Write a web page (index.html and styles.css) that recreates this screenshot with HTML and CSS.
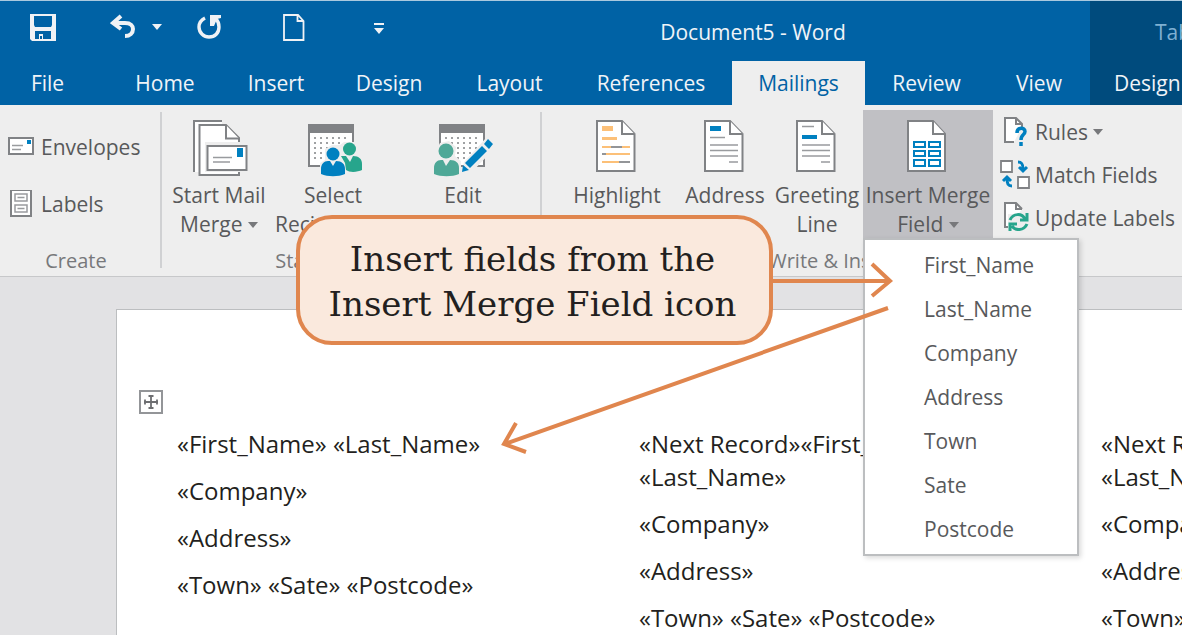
FILE: index.html
```html
<!DOCTYPE html>
<html lang="en">
<head>
    <meta charset="UTF-8">
    <meta name="viewport" content="width=device-width, initial-scale=1.0">
    <title>Document5 - Word</title>
    <link rel="stylesheet" href="styles.css">
</head>
<body>
    <div class="window">
        <header class="header">
            <div class="header-main">
                <div class="titlebar">
                    <div class="quick-access">
                        <button class="qa-btn qa-save" aria-label="Save">
                            <svg width="26" height="27" viewBox="0 0 26 27"><path fill="#f0f2f5" fill-rule="evenodd" d="M0 0H26V27H2L0 25ZM4 2V11L5 13H21L22 11V2ZM5 17V25H9V20H13V25H21V17Z"/><path fill="#f0f2f5" d="M9 20H13V25H9Z"/><path fill="#0062a5" d="M10 22H12V25H10Z"/></svg>
                        </button>
                        <button class="qa-btn qa-undo" aria-label="Undo">
                            <svg width="54" height="26" viewBox="0 0 54 26"><path fill="none" stroke="#f0f2f5" stroke-width="4" d="M11 2 3 9 11 15M3 9H15C21 9 23 12 23 15 23 19 20 22 15 22"/><path fill="#f0f2f5" d="M42 10H52L47 16Z"/></svg>
                        </button>
                        <button class="qa-btn qa-redo" aria-label="Redo">
                            <svg width="26" height="26" viewBox="0 0 26 26"><path fill="none" stroke="#f0f2f5" stroke-width="3.400" d="M8 4C4 6 2 9 2 13 2 19 7 23 12 23 18 23 22 19 22 13 22 10 21 7 19 5"/><path fill="#f0f2f5" d="M13 1H24V4L20 5 17 12H13Z"/></svg>
                        </button>
                        <button class="qa-btn qa-new" aria-label="New document">
                            <svg width="22" height="27" viewBox="0 0 22 27"><path fill="none" stroke="#f0f2f5" stroke-width="1.800" d="M1 1H15L20.500 7V26H1ZM14.500 1V7H20.500"/></svg>
                        </button>
                        <button class="qa-btn" aria-label="Customize Quick Access Toolbar">
                            <svg width="12" height="14" viewBox="0 0 12 14"><path fill="#f0f2f5" d="M1 1H11V3H1ZM1 6H11L6 12Z"/></svg>
                        </button>
                    </div>
                    <div class="doc-title">Document5 - Word</div>
                </div>
                <nav class="tabs">
                    <button class="tab">File</button>
                    <button class="tab tab-home">Home</button>
                    <button class="tab">Insert</button>
                    <button class="tab">Design</button>
                    <button class="tab">Layout</button>
                    <button class="tab">References</button>
                    <button class="tab active">Mailings</button>
                    <button class="tab">Review</button>
                    <button class="tab">View</button>
                </nav>
            </div>
            <div class="header-context">
                <div class="context-title">Table Tools</div>
                <button class="tab">Design</button>
            </div>
        </header>

        <div class="ribbon">
            <section class="group group-create">
                <div class="group-body stack-wide">
                    <button class="small-btn">
                        <svg width="28" height="28" viewBox="0 0 28 28"><rect x="1" y="5" width="24" height="16" fill="#fff" stroke="#808285" stroke-width="2"/><path fill="#0080c0" d="M19 7H23V11H19Z"/><path stroke="#999b9e" stroke-width="1.400" d="M4 12.500H15M4 16.500H13"/></svg>
                        Envelopes
                    </button>
                    <button class="small-btn">
                        <svg width="28" height="28" viewBox="0 0 28 28"><rect x="3" y="0" width="20" height="26" fill="#fff" stroke="#808285" stroke-width="2"/><path fill="none" stroke="#999b9e" stroke-width="1.500" d="M7 4H19V11H7ZM7 15H19V22H7ZM9.500 7.500H16.500M9.500 18.500H16.500"/></svg>
                        Labels
                    </button>
                </div>
                <div class="group-label">Create</div>
            </section>

            <section class="group group-start">
                <div class="group-body">
                    <button class="big-btn">
                        <svg width="60" height="60" viewBox="0 0 60 60"><path fill="#fff" d="M4 3H33V7H10V54H4Z"/><path fill="none" stroke="#808285" stroke-width="2" d="M33 3H5V54"/><path fill="#fff" stroke="#808285" stroke-width="2" d="M10.500 7H37L50 20V57H10.500Z"/><path fill="#fff" stroke="#808285" stroke-width="2" d="M37 7V20.500H50"/><path fill="#eee" d="M16 24H60V54H16Z"/><path fill="#fff" stroke="#808285" stroke-width="2" d="M18.500 28H57.500V52H18.500Z"/><path fill="#0080c0" d="M48 30H54V39H48Z"/><path stroke="#999b9e" stroke-width="1.400" d="M24 39.500H43M24 44H41"/></svg>
                        <span>Start Mail<br>Merge <i class="caret"></i></span>
                    </button>
                    <button class="big-btn">
                        <svg width="60" height="60" viewBox="0 0 60 60"><path fill="#fff" stroke="#808285" stroke-width="2" d="M6 8H50V48H6Z"/><path fill="#808285" d="M5 6H51V15H5Z"/><path stroke="#808285" stroke-width="1.700" stroke-dasharray="2 4" d="M11 20H47M11 25H47M11 30H47M11 35H47M11 40H47"/><path fill="#eee" d="M17 60V45L22 42 22 31 29 27H37L41 24H53L56 29V37L61 41V60Z"/><circle cx="46.500" cy="31" r="6.500" fill="#27a58c"/><path fill="#27a58c" d="M38 38H43L47 44 50 38C56 38 59 41 59 46V52C55 54 47 55 43 52L42 45Z"/><circle cx="30" cy="36" r="6.500" fill="#0080c0"/><path fill="#0080c0" d="M25 43H27L30 48 33 43C39 43 42 46 42 51V56C35 59 25 59 18 56V51C18 46 21 43 25 43Z"/></svg>
                        <span>Select<br>Recipients <i class="caret"></i></span>
                    </button>
                    <button class="big-btn btn-edit">
                        <svg width="60" height="60" viewBox="0 0 60 60"><path fill="#fff" stroke="#808285" stroke-width="2" d="M7 8H51V48H7Z"/><path fill="#808285" d="M6 6H52V15H6Z"/><path stroke="#808285" stroke-width="1.700" stroke-dasharray="2 4" d="M12 20H48M12 25H48M12 30H48M12 35H48M12 40H48"/><path fill="#eee" d="M0 60V43L5 40 3 33 7 25 16 23 23 29 22 38 28 43V60ZM28 57 31 44 53 20 61 24V31L37 56Z"/><circle cx="13" cy="33" r="7.500" fill="#4ea897"/><path fill="#4ea897" d="M8 42H10L13 48 17 42C23 42 26 45 26 50V56C19 59 8 59 1 56V50C1 45 4 42 8 42Z"/><path fill="#0080c0" d="M30 47 36 52 29 54ZM32 45 49 28 54 33 37 50ZM51 26 55 21 60 26 56 31Z"/></svg>
                        <span>Edit<br>Recipient List</span>
                    </button>
                </div>
                <div class="group-label">Start Mail Merge</div>
            </section>

            <section class="group group-write">
                <div class="group-body">
                    <button class="big-btn btn-highlight">
                        <svg width="60" height="60" viewBox="0 0 60 60"><path fill="#fff" stroke="#808285" stroke-width="2" d="M10 3H35L47.500 16V53H10Z"/><path fill="#fff" stroke="#808285" stroke-width="2" d="M35 3V16H47.500"/><path fill="#fcc078" d="M15 8H26V13H15ZM15 19H30V22H15Z"/><path stroke="#fcc078" stroke-width="2" d="M15 29H43M15 36H43M15 44H43"/><path stroke="#939598" stroke-width="2" d="M24 29H35M15 36H19M32 44H43"/></svg>
                        <span>Highlight<br>Merge Fields</span>
                    </button>
                    <button class="big-btn btn-line">
                        <svg width="60" height="60" viewBox="0 0 60 60"><path fill="#fff" stroke="#808285" stroke-width="2" d="M10 3H35L47.500 16V53H10Z"/><path fill="#fff" stroke="#808285" stroke-width="2" d="M35 3V16H47.500"/><path fill="#0080c0" d="M15 8H26V13H15Z"/><path stroke="#999b9e" stroke-width="1.600" d="M15 19.500H30M15 27H43M15 32.500H43M15 38H43M34 44H43"/></svg>
                        <span>Address<br>Block</span>
                    </button>
                    <button class="big-btn btn-line">
                        <svg width="60" height="60" viewBox="0 0 60 60"><path fill="#fff" stroke="#808285" stroke-width="2" d="M10 3H35L47.500 16V53H10Z"/><path fill="#fff" stroke="#808285" stroke-width="2" d="M35 3V16H47.500"/><path fill="#0080c0" d="M15 17H30V21H15Z"/><path stroke="#999b9e" stroke-width="1.600" d="M15 8.500H27M15 27H43M15 32.500H43M15 38H43M34 44H43"/></svg>
                        <span>Greeting<br>Line</span>
                    </button>
                    <div class="menu-anchor">
                        <button class="big-btn btn-insert" aria-haspopup="menu" aria-expanded="true">
                            <svg width="60" height="60" viewBox="0 0 60 60"><path fill="#fff" stroke="#808285" stroke-width="2" d="M10 3H35L47 16V53H10Z"/><path fill="#fff" stroke="#808285" stroke-width="2" d="M35 3V16H47"/><path fill="#fff" stroke="#0080c0" stroke-width="2" d="M16 24H27V29H16ZM31 24H42V29H31ZM16 33H27V38H16ZM31 33H42V38H31ZM16 42H27V48H16ZM31 42H42V48H31Z"/></svg>
                            <span>Insert Merge<br>Field <i class="caret"></i></span>
                        </button>
                        <ul class="menu" role="menu">
                            <li><button role="menuitem">First_Name</button></li>
                            <li><button role="menuitem">Last_Name</button></li>
                            <li><button role="menuitem">Company</button></li>
                            <li><button role="menuitem">Address</button></li>
                            <li><button role="menuitem">Town</button></li>
                            <li><button role="menuitem">Sate</button></li>
                            <li><button role="menuitem">Postcode</button></li>
                        </ul>
                    </div>
                    <div class="stack">
                        <button class="small-btn">
                            <svg width="30" height="32" viewBox="0 0 30 32"><path fill="#fff" stroke="#808285" stroke-width="2" d="M14 26H5V2H16L22 8V11"/><path fill="none" stroke="#808285" stroke-width="2" d="M16 2V8H22"/><path fill="none" stroke="#0080c0" stroke-width="3.500" d="M17 17C17 11 25 11 25 15.500 25 19 21 18 21 24M21 26V30"/></svg>
                            Rules <i class="caret"></i>
                        </button>
                        <button class="small-btn">
                            <svg width="30" height="32" viewBox="0 0 30 32"><path fill="#fff" stroke="#808285" stroke-width="1.800" d="M1 2H12V13H1ZM18 18H29V29H18Z"/><path fill="none" stroke="#0080c0" stroke-width="3" d="M18 3C22 3 23 5 23 10M19 8 23 12 27 8M12 27C8 27 7 25 7 19M3 22 7 18 11 22"/></svg>
                            Match Fields
                        </button>
                        <button class="small-btn">
                            <svg width="30" height="32" viewBox="0 0 30 32"><path fill="#fff" stroke="#808285" stroke-width="2" d="M9 25H5V1H16L22 7"/><path fill="none" stroke="#808285" stroke-width="2" d="M16 1V7H22"/><path fill="#eee" d="M8 12H30V31H8Z"/><path fill="none" stroke="#27a58c" stroke-width="3" d="M10 18C13 11 22 11 25 17M27 11V18H20M27 22C24 29 15 29 12 24M10 29V22H17"/></svg>
                            Update Labels
                        </button>
                    </div>
                </div>
                <div class="group-label">Write &amp; Insert Fields</div>
            </section>
        </div>

        <main class="workspace">
            <div class="page">
                <button class="table-handle" aria-label="Move table">
                    <svg width="18" height="18" viewBox="0 0 18 18"><path fill="none" stroke="#6d6e71" stroke-width="1.800" d="M9 2V16M2 9H16M6.500 3H11.500M6.500 15H11.500M3 6.500V11.500M15 6.500V11.500"/></svg>
                </button>
                <table class="labels">
                    <tr>
                        <td>
                            <p>«First_Name» «Last_Name»</p>
                            <p>«Company»</p>
                            <p>«Address»</p>
                            <p>«Town» «Sate» «Postcode»</p>
                        </td>
                        <td>
                            <p>«Next Record»«First_Name»<br>«Last_Name»</p>
                            <p>«Company»</p>
                            <p>«Address»</p>
                            <p>«Town» «Sate» «Postcode»</p>
                        </td>
                        <td>
                            <p>«Next Record»«First_Name»<br>«Last_Name»</p>
                            <p>«Company»</p>
                            <p>«Address»</p>
                            <p>«Town» «Sate» «Postcode»</p>
                        </td>
                    </tr>
                </table>
            </div>
        </main>

        <!-- annotation on top of the window -->
        <svg class="arrows" width="400" height="200" viewBox="0 0 400 200">
            <path d="M275 24H391M374 7 392 24 374 39M390 51 7 187M18 166 6 187 28 195"/>
        </svg>
        <div class="callout">Insert fields from the<br>Insert Merge Field icon</div>
    </div>
</body>
</html>
```

FILE: styles.css
```css
* {
    box-sizing: border-box;
}
body {
    margin: 0;
    font-family: 'Open Sans', 'Noto Sans', sans-serif;
    font-size: 21px;
    color: #58595b;
    background: #e2e2e4;
}
button {
    margin: 0;
    padding: 0;
    border: 0;
    background: none;
    font: inherit;
    color: inherit;
    white-space: nowrap;
}
svg {
    display: block;
    flex: none;
}
.window {
    position: relative;
    display: flex;
    flex-direction: column;
    height: 100vh;
    overflow: hidden;
}

/* title bar and tabs */
.header {
    display: flex;
    flex: none;
    color: #f0f4f8;
    background: #0062a5;
    border-top: 1px solid #a9c9df;
}
.header-main {
    flex: 1;
}
.titlebar {
    display: flex;
    height: 60px;
}
.quick-access {
    display: flex;
    flex: none;
    align-items: flex-start;
    width: 416px;
    padding: 13px 0 0 30px;
}
.qa-save {
    margin-right: 54px;
}
.qa-undo {
    margin-right: 33px;
}
.qa-redo {
    margin-right: 60px;
}
.qa-new {
    margin-right: 68px;
}
.qa-btn:last-child {
    padding-top: 8px;
}
.doc-title {
    flex: 1;
    text-align: center;
    line-height: 62px;
}
.tabs {
    display: grid;
    grid-template-columns: 95fr 128fr 106fr 120fr 121fr 162fr 133fr 123fr 102fr;
}
.tab {
    height: 44px;
    line-height: 44px;
    text-align: center;
}
.tab-home {
    padding-left: 12px;
}
.tab.active {
    color: #0062a5;
    background: #eee;
}
.header-context {
    flex: none;
    width: 92px;
    overflow: hidden;
    background: #004b7d;
}
.context-title {
    height: 60px;
    padding-left: 65px;
    line-height: 62px;
    white-space: nowrap;
    color: #7fb0d2;
}
.header-context .tab {
    padding-left: 24px;
}

/* ribbon */
.ribbon {
    display: flex;
    flex: none;
    padding-top: 5px;
    background: #eee;
    border-bottom: 1px solid #c7c8ca;
}
.group {
    position: relative;
    flex: none;
}
.group-create {
    width: 162px;
}
.group-start {
    width: 380px;
}
.group-create::after,
.group-start::after {
    content: '';
    position: absolute;
    top: 2px;
    right: 0;
    bottom: 8px;
    width: 2px;
    background: #d0d1d3;
}
.group-write {
    width: 640px;
}
.group-body {
    display: flex;
    height: 129px;
}
.group-label {
    padding-top: 7px;
    height: 37px;
    line-height: 29px;
    font-size: 20px;
    text-align: center;
    color: #77787b;
}
.group-create .group-label {
    padding-right: 10px;
}
.big-btn {
    display: flex;
    flex: none;
    flex-direction: column;
    align-items: center;
    gap: 3px;
    width: 114px;
    padding-top: 8px;
    line-height: 29px;
}
.btn-edit {
    width: 146px;
}
.btn-highlight {
    width: 124px;
    margin-left: 13px;
}
.btn-line {
    width: 92px;
}
.btn-insert {
    width: 130px;
    background: #c0c0c4;
}
.caret {
    display: inline-block;
    vertical-align: 4px;
    border: 5px solid transparent;
    border-top: 6px solid #77787b;
    border-bottom: 0;
}
.small-btn {
    display: flex;
    align-items: center;
    gap: 5px;
}
.stack,
.stack-wide {
    display: flex;
    flex-direction: column;
    align-items: flex-start;
}
.stack {
    padding: 6px 0 0 7px;
    gap: 11px;
}
.stack .small-btn {
    height: 32px;
}
.stack-wide {
    padding: 23px 0 0 8px;
    gap: 29px;
}
.stack-wide .small-btn {
    height: 28px;
}

/* drop-down with the merge fields */
.menu-anchor {
    position: relative;
    flex: none;
}
.menu {
    position: absolute;
    top: 128px;
    left: 0;
    z-index: 1;
    width: 216px;
    margin: 0;
    padding: 3px 0;
    list-style: none;
    background: #fff;
    border: 2px solid #bcbec0;
    box-shadow: 2px 2px 5px rgba(0, 0, 0, .15);
}
.menu button {
    display: block;
    width: 100%;
    height: 44px;
    padding-left: 59px;
    line-height: 44px;
    text-align: left;
}

/* document */
.workspace {
    flex: 1;
    min-height: 0;
    padding: 32px 0 0 116px;
}
.page {
    height: 100%;
    padding: 80px 0 0 22px;
    overflow: hidden;
    background: #fff;
    border: solid #bcbec0;
    border-width: 1px 0 0 1px;
}
.table-handle {
    display: flex;
    align-items: center;
    justify-content: center;
    width: 24px;
    height: 24px;
    border: 2px solid #939598;
}
.labels {
    width: 1386px;
    margin: 13px 0 0 38px;
    border-collapse: collapse;
    table-layout: fixed;
    font-size: 24px;
    line-height: 33px;
    color: #231f20;
}
.labels td {
    padding: 0;
    vertical-align: top;
    white-space: nowrap;
}
.labels p {
    margin: 0 0 14px;
}

/* annotation */
.arrows {
    position: absolute;
    top: 257px;
    left: 498px;
    z-index: 2;
    fill: none;
    stroke: #e0864e;
    stroke-width: 4;
}
.callout {
    position: absolute;
    top: 215px;
    left: 296px;
    z-index: 3;
    width: 477px;
    padding: 18px 4px 14px 0;
    font-family: 'DejaVu Serif', serif;
    font-size: 34px;
    line-height: 45px;
    text-align: center;
    color: #231f20;
    background: #fae9dd;
    border: 4px solid #e0864e;
    border-radius: 36px;
}
```
